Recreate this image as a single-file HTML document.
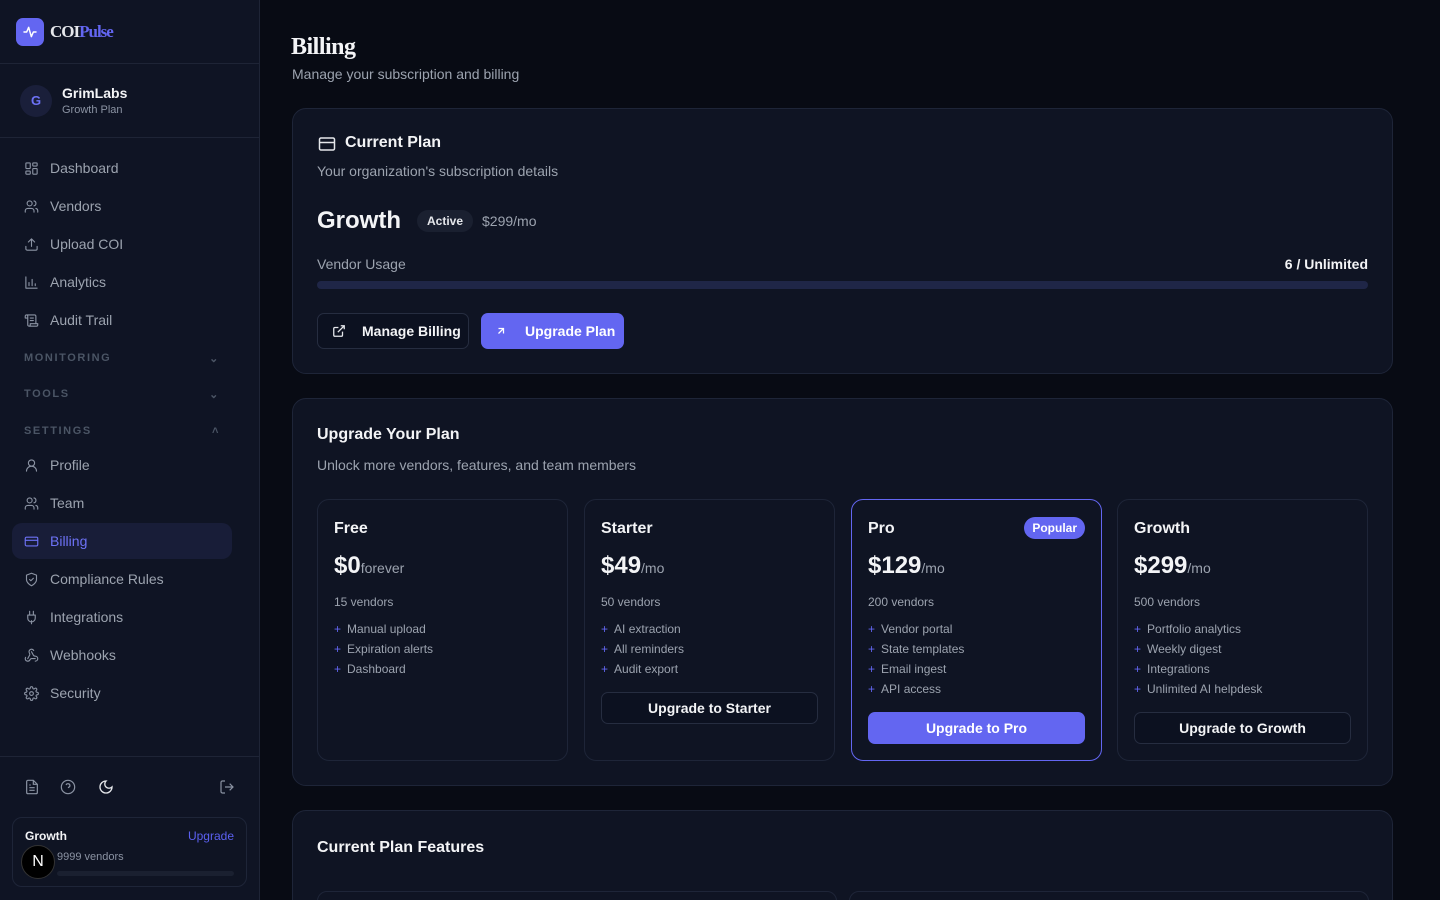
<!DOCTYPE html>
<html><head><meta charset="utf-8"><style>
*{box-sizing:border-box;margin:0;padding:0}
html,body{width:1440px;height:900px;overflow:hidden}
body{background:#080b14;font-family:"Liberation Sans",sans-serif;color:#e5e7eb;position:relative}
#wrap{position:absolute;left:0;top:0;width:1440px;height:900px;overflow:hidden}
.sb{position:absolute;left:0;top:0;width:260px;height:900px;background:#0f1424;border-right:1px solid #1e2436}
.logo{height:64px;border-bottom:1px solid #1e2436;display:flex;align-items:center;padding-left:16px}
.lg{width:28px;height:28px;border-radius:7px;background:#6366f1;display:flex;align-items:center;justify-content:center}
.org{height:74px;border-bottom:1px solid #1e2436;display:flex;align-items:center;padding-left:20px}
.av{width:32px;height:32px;border-radius:50%;background:#1a1f3a;color:#6d72f6;font-weight:bold;font-size:13px;display:flex;align-items:center;justify-content:center;margin-right:10px}
.nav{position:absolute;left:12px;width:220px;height:36px;display:flex;align-items:center;padding-left:12px;font-size:14px;color:#9ca3af;border-radius:10px}
.nav svg{width:15px;height:15px;margin-right:11px;stroke:#8b93a3;fill:none;stroke-width:1.8;stroke-linecap:round;stroke-linejoin:round}
.nav.act{background:#181d38;color:#6d72f6}.nav.act svg{stroke:#6d72f6}
.sec{position:absolute;left:24px;width:196px;font-size:11px;letter-spacing:1.6px;color:#4b5565;font-weight:bold;display:flex;justify-content:space-between}
.card{position:absolute;left:292px;width:1101px;background:#0f1423;border:1px solid #1e2538;border-radius:14px}
.pc{position:absolute;top:499px;width:251px;height:262px;border:1px solid #1e2538;border-radius:12px;padding:20px 16px}
.pc h4{font-size:16px;color:#f3f4f6}
.pr{font-size:24px;font-weight:bold;color:#f3f4f6;margin-top:14px}.pr span{font-size:14px;font-weight:normal;color:#9ca3af}
.vn{font-size:12px;color:#9ca3af;margin-top:15px}
.ft{font-size:12px;color:#9ca3af;margin-top:10px;line-height:20px}.ft b{color:#6366f1;font-weight:normal;margin-right:6px}
.bt{position:absolute;left:16px;right:16px;height:32px;border:1px solid #262d40;border-radius:7px;font-size:14px;font-weight:bold;color:#f3f4f6;display:flex;align-items:center;justify-content:center;background:#0c1120}
</style></head><body><div id="wrap">
<div class="sb">
<div class="logo"><div class="lg"><svg width="16" height="16" viewBox="0 0 24 24" fill="none" stroke="#fff" stroke-width="2.2" stroke-linecap="round" stroke-linejoin="round"><path d="M3 12h4l3-7 4 14 3-7h4"/></svg></div><span style="margin-left:6px;font-family:'Liberation Serif',serif;font-weight:bold;font-size:17px;letter-spacing:-1px"><span style="color:#e5e7eb">COI</span><span style="color:#6366f1">Pulse</span></span></div>
<div class="org"><div class="av">G</div><div><div style="font-size:14px;font-weight:bold;color:#f3f4f6">GrimLabs</div><div style="font-size:11px;color:#8b93a3;margin-top:3px">Growth Plan</div></div></div>
<div class="nav" style="top:150px"><svg viewBox="0 0 24 24"><rect x="3" y="3" width="7" height="9" rx="1"/><rect x="14" y="3" width="7" height="5" rx="1"/><rect x="14" y="12" width="7" height="9" rx="1"/><rect x="3" y="16" width="7" height="5" rx="1"/></svg>Dashboard</div>
<div class="nav" style="top:188px"><svg viewBox="0 0 24 24"><circle cx="9" cy="7" r="4"/><path d="M2 21v-2a4 4 0 014-4h6a4 4 0 014 4v2M16 3.1a4 4 0 010 7.8M22 21v-2a4 4 0 00-3-3.9"/></svg>Vendors</div>
<div class="nav" style="top:226px"><svg viewBox="0 0 24 24"><path d="M21 15v4a2 2 0 01-2 2H5a2 2 0 01-2-2v-4M17 8l-5-5-5 5M12 3v12"/></svg>Upload COI</div>
<div class="nav" style="top:264px"><svg viewBox="0 0 24 24"><path d="M3 3v18h18M8 17v-5M13 17V7M18 17v-3"/></svg>Analytics</div>
<div class="nav" style="top:302px"><svg viewBox="0 0 24 24"><path d="M8 21h12a2 2 0 002-2v-2H10v2a2 2 0 11-4 0V5a2 2 0 10-4 0v3h4M19 17V5a2 2 0 00-2-2H4M15 8h-5M15 12h-5"/></svg>Audit Trail</div>
<div class="sec" style="top:352px"><span>MONITORING</span><span>⌄</span></div>
<div class="sec" style="top:388px"><span>TOOLS</span><span>⌄</span></div>
<div class="sec" style="top:425px"><span>SETTINGS</span><span>˄</span></div>
<div class="nav" style="top:447px"><svg viewBox="0 0 24 24"><circle cx="12" cy="8" r="5"/><path d="M20 21a8 8 0 00-16 0"/></svg>Profile</div>
<div class="nav" style="top:485px"><svg viewBox="0 0 24 24"><circle cx="9" cy="7" r="4"/><path d="M2 21v-2a4 4 0 014-4h6a4 4 0 014 4v2M16 3.1a4 4 0 010 7.8M22 21v-2a4 4 0 00-3-3.9"/></svg>Team</div>
<div class="nav act" style="top:523px"><svg viewBox="0 0 24 24"><rect x="2" y="5" width="20" height="14" rx="2"/><path d="M2 10h20"/></svg>Billing</div>
<div class="nav" style="top:561px"><svg viewBox="0 0 24 24"><path d="M12 22s8-4 8-10V5l-8-3-8 3v7c0 6 8 10 8 10z"/><path d="M9 12l2 2 4-4"/></svg>Compliance Rules</div>
<div class="nav" style="top:599px"><svg viewBox="0 0 24 24"><path d="M12 22v-5M9 8V2M15 8V2M18 8v5a6 6 0 01-12 0V8z"/></svg>Integrations</div>
<div class="nav" style="top:637px"><svg viewBox="0 0 24 24"><path d="M18 16.98h-5.99c-1.1 0-1.950.94-2.480 1.9A4 4 0 012 17c.01-.7.2-1.4.57-2M6 17l3.13-5.78c.53-.97.1-2.18-.5-3.1a4 4 0 116.89-4.060M12 6l3.13 5.73C15.66 12.7 16.9 13 18 13a4 4 0 010 8"/></svg>Webhooks</div>
<div class="nav" style="top:675px"><svg viewBox="0 0 24 24"><circle cx="12" cy="12" r="3"/><path d="M19.4 15a1.7 1.7 0 00.3 1.8l.1.1a2 2 0 11-2.8 2.8l-.1-.1a1.7 1.7 0 00-1.8-.3 1.7 1.7 0 00-1 1.5V21a2 2 0 01-4 0v-.1a1.7 1.7 0 00-1.1-1.5 1.7 1.7 0 00-1.8.3l-.1.1a2 2 0 11-2.8-2.8l.1-.1a1.7 1.7 0 00.3-1.8 1.7 1.7 0 00-1.5-1H3a2 2 0 010-4h.1a1.7 1.7 0 001.5-1.1 1.7 1.7 0 00-.3-1.8l-.1-.1a2 2 0 112.8-2.8l.1.1a1.7 1.7 0 001.8.3H9a1.7 1.7 0 001-1.5V3a2 2 0 014 0v.1a1.7 1.7 0 001 1.5 1.7 1.7 0 001.8-.3l.1-.1a2 2 0 112.8 2.8l-.1.1a1.7 1.7 0 00-.3 1.8V9a1.7 1.7 0 001.5 1H21a2 2 0 010 4h-.1a1.7 1.7 0 00-1.5 1z"/></svg>Security</div>
<div style="position:absolute;top:756px;left:0;width:259px;border-top:1px solid #1e2436"></div>
<svg style="position:absolute;left:24px;top:779px" width="16" height="16" viewBox="0 0 24 24" fill="none" stroke="#8b93a3" stroke-width="1.8"><path d="M14 2H6a2 2 0 00-2 2v16a2 2 0 002 2h12a2 2 0 002-2V8zM14 2v6h6M16 13H8M16 17H8M10 9H8"/></svg>
<svg style="position:absolute;left:60px;top:779px" width="16" height="16" viewBox="0 0 24 24" fill="none" stroke="#8b93a3" stroke-width="1.8"><circle cx="12" cy="12" r="10"/><path d="M9.1 9a3 3 0 015.8 1c0 2-3 3-3 3M12 17h.01"/></svg>
<svg style="position:absolute;left:98px;top:779px" width="16" height="16" viewBox="0 0 24 24" fill="none" stroke="#e5e7eb" stroke-width="2"><path d="M12 3a6 6 0 009 9 9 9 0 11-9-9z"/></svg>
<svg style="position:absolute;left:219px;top:779px" width="16" height="16" viewBox="0 0 24 24" fill="none" stroke="#8b93a3" stroke-width="1.8"><path d="M9 21H5a2 2 0 01-2-2V5a2 2 0 012-2h4M16 17l5-5-5-5M21 12H9"/></svg>
<div style="position:absolute;left:12px;top:817px;width:235px;height:70px;border:1px solid #1e2538;border-radius:10px;background:#0f1423">
<div style="position:absolute;left:12px;top:11px;font-size:12px;font-weight:bold;color:#f3f4f6">Growth</div>
<div style="position:absolute;right:12px;top:11px;font-size:12px;color:#5b60f0">Upgrade</div>
<div style="position:absolute;left:44px;top:33px;font-size:11px;color:#8b93a3">9999 vendors</div>
<div style="position:absolute;left:44px;top:53px;right:12px;height:5px;border-radius:3px;background:#1a2030"></div>
<div style="position:absolute;left:8px;top:27px;width:34px;height:34px;border-radius:50%;background:#000;border:1px solid #333;color:#fff;font-size:16px;display:flex;align-items:center;justify-content:center">N</div>
</div>
</div>

<div style="position:absolute;left:291px;top:34px;font-family:'Liberation Serif',serif;font-weight:bold;font-size:24px;color:#f3f4f6;letter-spacing:-0.5px">Billing</div>
<div style="position:absolute;left:292px;top:66px;font-size:14px;color:#9ca3af">Manage your subscription and billing</div>

<div class="card" style="top:108px;height:266px">
<svg style="position:absolute;left:25px;top:27px" width="18" height="16" viewBox="0 0 24 20" fill="none" stroke="#e5e7eb" stroke-width="2"><rect x="2" y="2" width="20" height="16" rx="2"/><path d="M2 8h20"/></svg>
<div style="position:absolute;left:52px;top:25px;font-size:16px;font-weight:bold;color:#f3f4f6">Current Plan</div>
<div style="position:absolute;left:24px;top:54px;font-size:14px;color:#9ca3af">Your organization's subscription details</div>
<div style="position:absolute;left:24px;top:98px;font-size:24px;font-weight:bold;color:#f3f4f6">Growth</div>
<div style="position:absolute;left:124px;top:101px;height:22px;padding:0 10px;border-radius:11px;background:#1a2030;font-size:12px;font-weight:bold;color:#e5e7eb;line-height:22px">Active</div>
<div style="position:absolute;left:189px;top:104px;font-size:14px;color:#9ca3af">$299/mo</div>
<div style="position:absolute;left:24px;top:147px;font-size:14px;color:#9ca3af">Vendor Usage</div>
<div style="position:absolute;right:24px;top:147px;font-size:14px;font-weight:bold;color:#f3f4f6">6 / Unlimited</div>
<div style="position:absolute;left:24px;right:24px;top:172px;height:8px;border-radius:4px;background:#1f2647"></div>
<div style="position:absolute;left:24px;top:204px;width:152px;height:36px;border:1px solid #262d40;border-radius:7px;background:#0c1120;font-size:14px;font-weight:bold;color:#f3f4f6;display:flex;align-items:center"><svg style="margin:0 16px 0 14px" width="14" height="14" viewBox="0 0 24 24" fill="none" stroke="#e5e7eb" stroke-width="2.2"><path d="M18 13v6a2 2 0 01-2 2H5a2 2 0 01-2-2V8a2 2 0 012-2h6M15 3h6v6M10 14L21 3"/></svg>Manage Billing</div>
<div style="position:absolute;left:188px;top:204px;width:143px;height:36px;border-radius:7px;background:#6366f1;font-size:14px;font-weight:bold;color:#fff;display:flex;align-items:center"><svg style="margin:0 18px 0 14px" width="12" height="12" viewBox="0 0 24 24" fill="none" stroke="#fff" stroke-width="2.5"><path d="M7 17L17 7M7 7h10v10"/></svg>Upgrade Plan</div>
</div>

<div class="card" style="top:398px;height:388px">
<div style="position:absolute;left:24px;top:27px;font-size:16px;font-weight:bold;color:#f3f4f6">Upgrade Your Plan</div>
<div style="position:absolute;left:24px;top:58px;font-size:14px;color:#9ca3af">Unlock more vendors, features, and team members</div>
</div>
<div class="pc" style="left:317px"><h4>Free</h4><div class="pr">$0<span>forever</span></div><div class="vn">15 vendors</div><div class="ft"><b>+</b>Manual upload<br><b>+</b>Expiration alerts<br><b>+</b>Dashboard</div></div>
<div class="pc" style="left:584px"><h4>Starter</h4><div class="pr">$49<span>/mo</span></div><div class="vn">50 vendors</div><div class="ft"><b>+</b>AI extraction<br><b>+</b>All reminders<br><b>+</b>Audit export</div><div class="bt" style="top:192px">Upgrade to Starter</div></div>
<div class="pc" style="left:851px;border-color:#6366f1"><h4>Pro</h4><div style="position:absolute;right:16px;top:17px;height:22px;padding:0 8px;border-radius:11px;background:#6366f1;color:#fff;font-size:12px;font-weight:bold;line-height:22px">Popular</div><div class="pr">$129<span>/mo</span></div><div class="vn">200 vendors</div><div class="ft"><b>+</b>Vendor portal<br><b>+</b>State templates<br><b>+</b>Email ingest<br><b>+</b>API access</div><div class="bt" style="top:212px;background:#6366f1;border-color:#6366f1;color:#fff">Upgrade to Pro</div></div>
<div class="pc" style="left:1117px"><h4>Growth</h4><div class="pr">$299<span>/mo</span></div><div class="vn">500 vendors</div><div class="ft"><b>+</b>Portfolio analytics<br><b>+</b>Weekly digest<br><b>+</b>Integrations<br><b>+</b>Unlimited AI helpdesk</div><div class="bt" style="top:212px">Upgrade to Growth</div></div>

<div class="card" style="top:810px;height:120px">
<div style="position:absolute;left:24px;top:28px;font-size:16px;font-weight:bold;color:#f3f4f6">Current Plan Features</div>
<div style="position:absolute;left:24px;top:80px;width:520px;height:40px;border:1px solid #1e2538;border-radius:10px"></div>
<div style="position:absolute;left:556px;top:80px;width:520px;height:40px;border:1px solid #1e2538;border-radius:10px"></div>
</div>
</div></body></html>
